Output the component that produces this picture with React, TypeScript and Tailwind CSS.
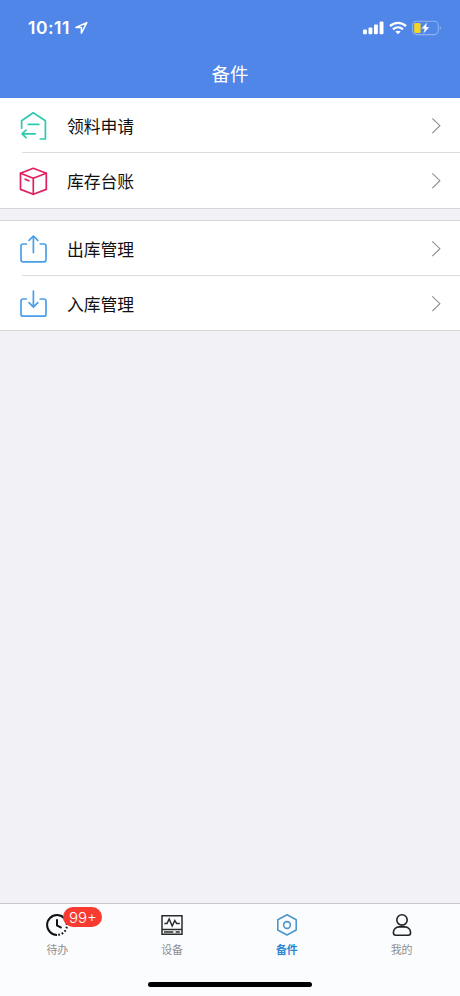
import type { ReactNode } from "react";

interface MenuItem {
  label: string;
  icon: ReactNode;
}

interface TabItem {
  label: string;
  icon: ReactNode;
  badge?: string;
  active?: boolean;
}

const iconProps = {
  width: 30,
  height: 30,
  viewBox: "0 0 30 30",
  fill: "none",
  strokeWidth: 1.7,
  strokeLinecap: "round" as const,
  strokeLinejoin: "round" as const,
};

const tabIconProps = {
  width: 26,
  height: 26,
  viewBox: "0 0 26 26",
  fill: "none",
};

const RequestIcon = () => (
  <svg {...iconProps} stroke="#2ccbad">
    <path d="M3.6 17.2V9.8L15.2 1.8L27.4 9.8V28H22.2" />
    <path d="M10.3 13.4H20.8M4 22.8H17.2M8 19.2L4 22.8L8 26.6" />
  </svg>
);

const BoxIcon = () => (
  <svg {...iconProps} stroke="#de1f60">
    <path d="M15.3 2.3L28.3 7.3V23.4L15.3 28.3L2.5 23.4V7.3L15.3 2.3Z" />
    <path d="M2.5 7.3L15.3 12.2L28.3 7.3M15.3 12.2V28.3M7.2 13.2L10.8 14.8" />
  </svg>
);

const OutboundIcon = () => (
  <svg {...iconProps} stroke="#4a9fea">
    <path d="M8.4 10H5C3.8 10 3 10.8 3 12V25.8C3 27 3.8 27.8 5 27.8H26C27.2 27.8 28 27 28 25.8V12C28 10.8 27.2 10 26 10H22.2" />
    <path d="M15.4 18.6V2.2M11 6.4L15.4 2L19.8 6.4" />
  </svg>
);

const InboundIcon = () => (
  <svg {...iconProps} stroke="#4a9fea">
    <path d="M8.4 10H5C3.8 10 3 10.8 3 12V25.2C3 26.4 3.8 27.2 5 27.2H26C27.2 27.2 28 26.4 28 25.2V12C28 10.8 27.2 10 26 10H22.2" />
    <path d="M15.4 2.2V17.8M11 13.7L15.4 18.1L19.8 13.7" />
  </svg>
);

const ClockIcon = () => (
  <svg {...tabIconProps} stroke="#111111" strokeWidth="2">
    <path d="M13 22.9A9.9 9.9 0 1 1 22.9 13" />
    <path d="M22.8 14.8A9.9 9.9 0 0 1 13.8 22.9" strokeDasharray="1.7 1.9" />
    <path d="M13 7.3V13.4L17.6 15.8" />
  </svg>
);

const DeviceIcon = () => (
  <svg {...tabIconProps} stroke="#2b2b2b" strokeWidth="1.5">
    <path d="M3 3.7H23V22.2H3V3.7ZM3 17.4H23" />
    <path d="M5.4 11.6H8L10.2 7L13.2 14L15.8 8.5L17.7 11.6H20.8" />
    <path d="M5 19.9H14.4M16.6 19.9H20.8" />
  </svg>
);

const PartIcon = () => (
  <svg {...tabIconProps} stroke="#4b97c9" strokeWidth="1.6" strokeLinejoin="round">
    <path d="M13 2.8L22.2 7.7V18L13 23L3.8 18V7.7L13 2.8Z" />
    <circle cx="13" cy="13" r="3.4" />
  </svg>
);

const UserIcon = () => (
  <svg {...tabIconProps} stroke="#222222" strokeWidth="1.6" strokeLinejoin="round">
    <circle cx="13" cy="7.9" r="5.2" />
    <path d="M4.4 20.6C4.4 17.4 7 14.9 10.2 14.9H15.8C19 14.9 21.6 17.4 21.6 20.6C21.6 22.3 20.9 23.3 19.2 23.3H6.8C5.1 23.3 4.4 22.3 4.4 20.6Z" />
  </svg>
);

const groups: MenuItem[][] = [
  [
    { label: "领料申请", icon: <RequestIcon /> },
    { label: "库存台账", icon: <BoxIcon /> },
  ],
  [
    { label: "出库管理", icon: <OutboundIcon /> },
    { label: "入库管理", icon: <InboundIcon /> },
  ],
];

const tabs: TabItem[] = [
  { label: "待办", icon: <ClockIcon />, badge: "99+" },
  { label: "设备", icon: <DeviceIcon /> },
  { label: "备件", icon: <PartIcon />, active: true },
  { label: "我的", icon: <UserIcon /> },
];

function StatusBar() {
  return (
    <div className="flex h-12 items-center justify-between pt-2 pr-[18px] pl-[28px] text-white">
      <div className="flex items-center gap-[5px]">
        <span className="font-[Inter,sans-serif] text-[17.5px] leading-none font-semibold tracking-[0.5px]">10:11</span>
        <svg width="14" height="14" viewBox="0 0 14 14" fill="none" stroke="white" strokeWidth="1.5" strokeLinejoin="round">
          <path d="M11.8 1.6L0.9 6.5H6.4V12.2L11.8 1.6Z" />
        </svg>
      </div>
      <div className="flex items-center gap-[5px]">
        <svg width="21" height="14" viewBox="0 0 21 14" fill="white">
          <rect x="0" y="8.6" width="3.9" height="4.6" rx="1" />
          <rect x="5.5" y="6.4" width="3.9" height="6.8" rx="1" />
          <rect x="11" y="3.6" width="3.9" height="9.6" rx="1" />
          <rect x="16.6" y="0.6" width="3.9" height="12.6" rx="1" />
        </svg>
        <svg width="18" height="14" viewBox="0 0 18 14" fill="none" stroke="white" strokeWidth="2.4">
          <path d="M1 5.1C5.6 0.8 12.4 0.8 17 5.1" />
          <path d="M4 8.3C6.9 5.7 11.1 5.7 14 8.3" />
          <path d="M9 13.2L6.3 10.6C7.8 9.3 10.2 9.3 11.7 10.6L9 13.2Z" fill="white" stroke="none" />
        </svg>
        <svg width="30" height="16" viewBox="0 0 30 16" fill="none">
          <rect x="0.6" y="1.2" width="25.6" height="13.4" rx="4" stroke="#8fb3f0" strokeWidth="1.1" />
          <path d="M27.8 6V10C29.2 9.4 29.2 6.6 27.8 6Z" fill="#8fb3f0" />
          <rect x="2.2" y="3" width="6.4" height="9.9" rx="1.2" fill="#f3d526" />
          <path d="M15 2.2L9.2 8.8H12.4L11.4 13.8L17.6 7H14.4L15 2.2Z" fill="white" stroke="#4f86e8" strokeWidth="0.4" />
        </svg>
      </div>
    </div>
  );
}

function MenuRow({ item, last }: { item: MenuItem; last: boolean }) {
  return (
    <div className="flex h-full items-center pl-[18px]">
      <div className="shrink-0">{item.icon}</div>
      <span className="ml-[19px] flex-1 pt-[5px] text-[16.8px] leading-none text-[#111111]">{item.label}</span>
      <svg className="mr-[18px]" width="12" height="18" viewBox="0 0 12 18" fill="none" stroke="#8e8e93" strokeWidth="1.1">
        <path d="M2.3 1.3L9.9 8.7L2.3 16.1" />
      </svg>
      {!last && <div className="absolute right-0 bottom-0 left-[22px] h-px bg-[#dcdce0]" />}
    </div>
  );
}

export default function App() {
  return (
    <div className="flex h-[996px] w-[460px] flex-col overflow-hidden bg-[#f1f1f6] font-['Liberation_Sans','Noto_Sans_CJK_SC',sans-serif]">
      <header className="h-[98px] shrink-0 bg-[#4f86e8]">
        <StatusBar />
        <h1 className="flex h-[50px] items-center justify-center pt-[5px] text-[18.5px] leading-none font-normal text-white">备件</h1>
      </header>

      <main className="flex flex-1 flex-col gap-[11px]">
        {groups.map((group, i) => (
          <section key={i} className={i === 0 ? "border-b border-[#d5d5da] bg-white" : "border-y border-[#d5d5da] bg-white"}>
            {group.map((item, j) => (
              <div key={item.label} className={i > 0 && j === group.length - 1 ? "relative h-[54px] pt-px" : "relative h-[55px]"}>
                <MenuRow item={item} last={j === group.length - 1} />
              </div>
            ))}
          </section>
        ))}
      </main>

      {/* Tab bar */}
      <nav className="flex h-[93px] shrink-0 flex-col border-t border-[#c8c8cc] bg-[#fbfcfe]">
        <div className="grid grid-cols-4 pr-px">
          {tabs.map((tab) => (
            <div key={tab.label} className="flex flex-col items-center pt-2">
              <div className="relative">
                {tab.icon}
                {tab.badge && (
                  <span className="absolute -top-[5px] left-[19px] flex h-5 w-[39px] items-center justify-center rounded-full bg-[#f73b30] font-[Inter,sans-serif] text-[15px] leading-none font-light text-white">
                    {tab.badge}
                  </span>
                )}
              </div>
              <span
                className={
                  tab.active
                    ? "mt-[7px] text-[11px] leading-none font-bold text-[#2f86d0]"
                    : "mt-[7px] text-[11px] leading-none text-[#8f8f93]"
                }
              >
                {tab.label}
              </span>
            </div>
          ))}
        </div>
        <div className="mx-auto mt-auto mb-[9px] h-[5px] w-[164px] rounded-full bg-black" />
      </nav>
    </div>
  );
}
